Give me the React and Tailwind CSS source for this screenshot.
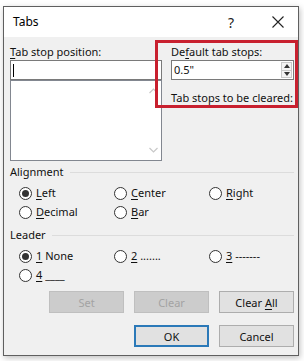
import React from "react";

const U = ({ children }) => (
  <span className="underline decoration-1 underline-offset-[2px]">{children}</span>
);

function Radio({ checked, children, className = "" }) {
  return (
    <div className={"flex items-center h-[19px] " + className}>
      <div className="w-[13px] h-[13px] rounded-full border border-[#333333] bg-white flex items-center justify-center shrink-0">
        {checked && <div className="w-[7px] h-[7px] rounded-full bg-[#333333]" />}
      </div>
      <div className="ml-[4px] whitespace-nowrap">{children}</div>
    </div>
  );
}

function Btn({ children, variant = "normal" }) {
  const base = "w-[75px] h-[22px] flex items-center justify-center leading-none";
  let cls;
  if (variant === "disabled") cls = base + " bg-[#cccccc] border border-[#bfbfbf] text-[#a3a3a3]";
  else if (variant === "default") cls = base + " bg-[#e1e1e1] border-2 border-[#2b79b8] text-[#111111]";
  else cls = base + " bg-[#e1e1e1] border border-[#adadad] text-[#111111]";
  return (
    <div className={cls}>
      <span className="whitespace-pre">{children}</span>
    </div>
  );
}

function SectionHeader({ children }) {
  return (
    <div className="flex items-center h-[16px] leading-[16px] pl-[6px] pr-[4px]">
      <span>{children}</span>
      <div className="flex-1 h-px bg-[#dcdcdc] ml-[6px]" />
    </div>
  );
}

export default function App() {
  return (
    <div
      className="w-[304px] h-[361px] bg-white pt-[6px] pl-[3px] text-[11px] text-[#111111]"
      style={{ fontFamily: '"Noto Sans", "Open Sans", sans-serif' }}
    >
      <div className="w-[296px] h-[350px] border border-[#5f5f5f] bg-[#f0f0f0] flex flex-col shadow-[1px_2px_6px_rgba(0,0,0,0.25)]">
        {/* Title bar */}
        <div className="h-[30px] bg-white flex items-center pl-[9px] pr-[14px] shrink-0">
          <span className="text-[12px] text-black">Tabs</span>
          <div className="flex-1" />
          <span className="text-[14px] text-[#222] mr-[38px]">?</span>
          <svg width="12" height="12" viewBox="0 0 12 12">
            <path d="M0.5 0.5 L11.5 11.5 M11.5 0.5 L0.5 11.5" stroke="#222" strokeWidth="1.1" fill="none" />
          </svg>
        </div>

        {/* Top section */}
        <div className="flex pt-[3px] pl-[6px]">
          <div className="w-[152px] shrink-0">
            <div className="mt-[4px] leading-[16px] h-[16px]">
              <U>T</U>ab stop position:
            </div>
            <div className="h-[20px] bg-white border border-[#7a7a7a] flex items-center pl-[2px]">
              <div className="w-px h-[13px] bg-black" />
            </div>
            <div className="h-[81px] bg-white border border-[#828790] flex justify-end">
              <div className="w-[15px] flex flex-col items-center justify-between py-[7px]">
                <svg width="9" height="6" viewBox="0 0 9 6">
                  <path d="M0.5 5 L4.5 1 L8.5 5" stroke="#c8c8c8" strokeWidth="1.2" fill="none" />
                </svg>
                <svg width="9" height="6" viewBox="0 0 9 6">
                  <path d="M0.5 1 L4.5 5 L8.5 1" stroke="#c8c8c8" strokeWidth="1.2" fill="none" />
                </svg>
              </div>
            </div>
          </div>

          <div className="ml-[-7px] w-[143px] h-[68px] border-[3px] border-[#c8202f] pl-[13px] pr-[1px] shrink-0">
            <div className="mt-[1px] leading-[16px] h-[16px]">
              De<U>f</U>ault tab stops:
            </div>
            <div className="h-[20px] bg-white border border-[#7a7a7a] flex items-center pl-[2px] pr-[1px]">
              <span className="flex-1">0.5"</span>
              <div className="w-[11px] h-[16px] border border-[#c9c9c9] bg-[#f3f3f3] flex flex-col">
                <div className="flex-1 flex items-center justify-center border-b border-[#c9c9c9]">
                  <svg width="6" height="4" viewBox="0 0 6 4"><path d="M0 4 L3 0 L6 4 Z" fill="#333" /></svg>
                </div>
                <div className="flex-1 flex items-center justify-center">
                  <svg width="6" height="4" viewBox="0 0 6 4"><path d="M0 0 L3 4 L6 0 Z" fill="#333" /></svg>
                </div>
              </div>
            </div>
            <div className="mt-[11px] leading-[14px] h-[14px] whitespace-nowrap">Tab stops to be cleared:</div>
          </div>
        </div>

        {/* Alignment */}
        <div className="mt-[3px]">
          <SectionHeader>Alignment</SectionHeader>
        </div>
        <div className="mt-[4px] pl-[15px] grid grid-cols-[95px_95px_95px]">
          <Radio checked><U>L</U>eft</Radio>
          <Radio><U>C</U>enter</Radio>
          <Radio><U>R</U>ight</Radio>
          <Radio><U>D</U>ecimal</Radio>
          <Radio><U>B</U>ar</Radio>
        </div>

        {/* Leader */}
        <div className="mt-[5px]">
          <SectionHeader>Leader</SectionHeader>
        </div>
        <div className="mt-[4px] pl-[15px] grid grid-cols-[95px_95px_95px]">
          <Radio checked><U>1</U> None</Radio>
          <Radio><U>2</U> .......</Radio>
          <Radio><U>3</U> -------</Radio>
          <Radio><U>4</U> ____</Radio>
        </div>

        {/* Buttons */}
        <div className="mt-[6px] flex justify-end gap-[10px] pr-[4px]">
          <Btn variant="disabled">Set</Btn>
          <Btn variant="disabled">Clear</Btn>
          <Btn>Clear <U>A</U>ll</Btn>
        </div>
        <div className="mt-[12px] flex justify-end gap-[10px] pr-[4px]">
          <Btn variant="default">OK</Btn>
          <Btn>Cancel</Btn>
        </div>
      </div>
    </div>
  );
}
